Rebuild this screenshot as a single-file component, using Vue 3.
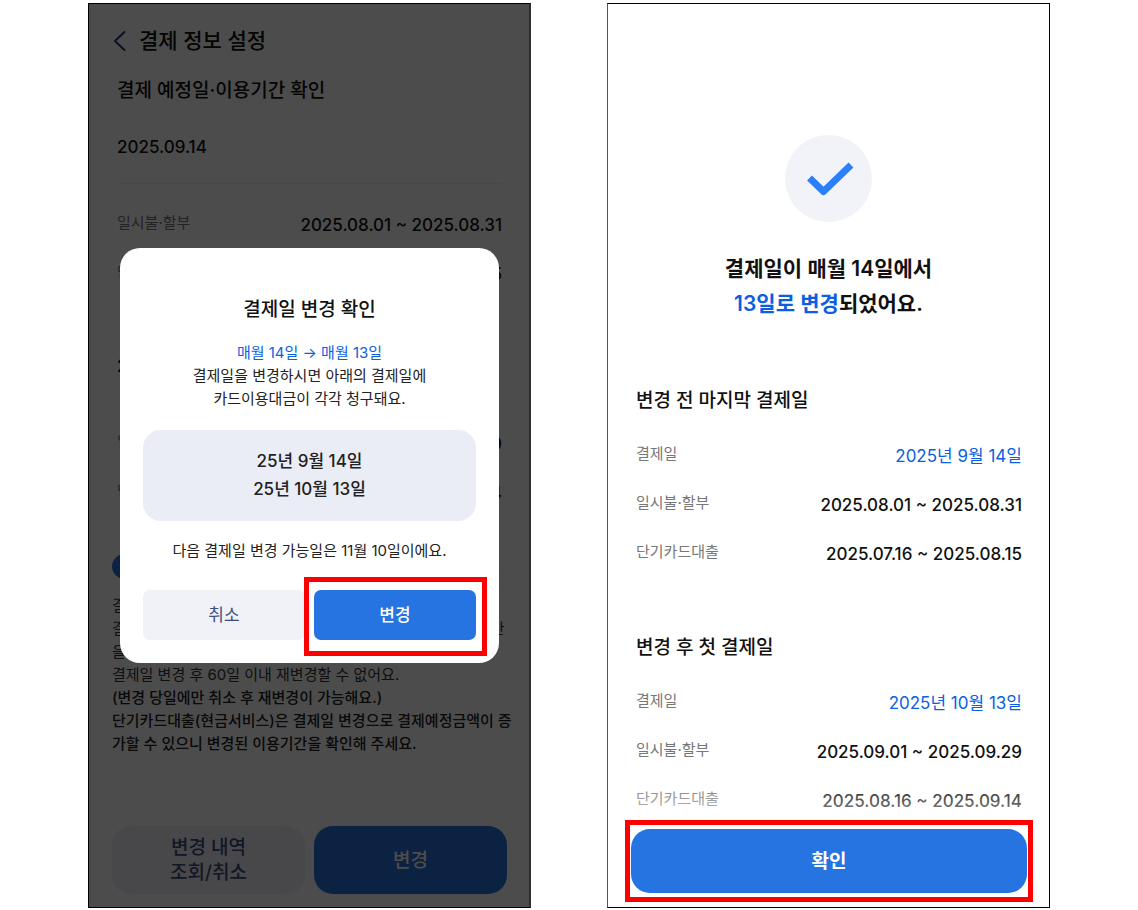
<script setup>
const currentPlan = [
  {
    date: '2025.09.14',
    rows: [
      { label: '일시불·할부', value: '2025.08.01 ~ 2025.08.31' },
      { label: '단기카드대출', value: '2025.07.16 ~ 2025.08.15' },
    ],
  },
  {
    date: '2025.10.13',
    rows: [
      { label: '일시불·할부', value: '2025.09.01 ~ 2025.09.29' },
      { label: '단기카드대출', value: '2025.08.16 ~ 2025.09.14' },
    ],
  },
]

const notices = [
  { text: '결제일을 변경하면 이용기간도 변경돼요.' },
  { text: '결제일 변경 시에는 변경 전과 변경 후의 결제일별 카드이용기간' },
  { text: '을 확인해 주세요.' },
  { text: '결제일 변경 후 60일 이내 재변경할 수 없어요.' },
  { text: '(변경 당일에만 취소 후 재변경이 가능해요.)', strong: true },
  { text: '단기카드대출(현금서비스)은 결제일 변경으로 결제예정금액이 증', strong: true },
  { text: '가할 수 있으니 변경된 이용기간을 확인해 주세요.', strong: true },
]

const results = [
  {
    title: '변경 전 마지막 결제일',
    rows: [
      { label: '결제일', value: '2025년 9월 14일', accent: true },
      { label: '일시불·할부', value: '2025.08.01 ~ 2025.08.31' },
      { label: '단기카드대출', value: '2025.07.16 ~ 2025.08.15' },
    ],
  },
  {
    title: '변경 후 첫 결제일',
    rows: [
      { label: '결제일', value: '2025년 10월 13일', accent: true },
      { label: '일시불·할부', value: '2025.09.01 ~ 2025.09.29' },
      { label: '단기카드대출', value: '2025.08.16 ~ 2025.09.14' },
    ],
  },
]
</script>

<template>
  <div class="page">
    <main class="phone phone-settings">
      <div class="settings">
        <header class="topbar">
          <button type="button" class="back" aria-label="뒤로">
            <svg width="14" height="22" viewBox="0 0 14 22" fill="none">
              <path d="M12.500 2 3 11 12.500 20" stroke="#273a73" stroke-width="2" stroke-linecap="round" stroke-linejoin="round" />
            </svg>
          </button>
          <h1>결제 정보 설정</h1>
        </header>
        <h2>결제 예정일·이용기간 확인</h2>
        <section v-for="plan in currentPlan" :key="plan.date" class="plan">
          <h3>{{ plan.date }}</h3>
          <dl class="rows">
            <div v-for="row in plan.rows" :key="row.label" class="row">
              <dt>{{ row.label }}</dt>
              <dd>{{ row.value }}</dd>
            </div>
          </dl>
        </section>
        <div class="info"></div>
        <div class="notices">
          <p v-for="notice in notices" :key="notice.text" :class="{ strong: notice.strong }">{{ notice.text }}</p>
        </div>
        <div class="actions">
          <button type="button" class="btn big soft">변경 내역<br />조회/취소</button>
          <button type="button" class="btn big primary">변경</button>
        </div>
      </div>

      <div class="overlay">
        <div class="modal" role="dialog" aria-labelledby="modal-title">
          <h2 id="modal-title">결제일 변경 확인</h2>
          <p class="lead"><span class="accent">매월 14일 → 매월 13일</span><br />결제일을 변경하시면 아래의 결제일에<br />카드이용대금이 각각 청구돼요.</p>
          <p class="dates">25년 9월 14일<br />25년 10월 13일</p>
          <p class="next">다음 결제일 변경 가능일은 11월 10일이에요.</p>
          <div class="modal-actions">
            <button type="button" class="btn soft cancel">취소</button>
            <div class="marked">
              <button type="button" class="btn primary">변경</button>
            </div>
          </div>
        </div>
      </div>
    </main>

    <main class="phone phone-result">
      <svg class="done" width="87" height="87" viewBox="0 0 87 87" fill="none">
        <circle cx="43.500" cy="43.500" r="43.500" fill="#f1f3f9" />
        <path d="M24.500 43 38.500 56.500 66 30" stroke="#2b7ffa" stroke-width="7" stroke-linejoin="round" />
      </svg>
      <h1>결제일이 매월 14일에서<br /><span class="accent">13일로 변경</span>되었어요.</h1>
      <section v-for="result in results" :key="result.title" class="result">
        <h2>{{ result.title }}</h2>
        <dl class="rows">
          <div v-for="row in result.rows" :key="row.label" class="row">
            <dt>{{ row.label }}</dt>
            <dd :class="{ accent: row.accent }">{{ row.value }}</dd>
          </div>
        </dl>
      </section>
      <footer class="confirm">
        <div class="marked">
          <button type="button" class="btn big primary">확인</button>
        </div>
      </footer>
    </main>
  </div>
</template>

<style>
body {
  margin: 0;
  background: #fff;
}
</style>

<style scoped>
.page {
  display: grid;
  grid-template-columns: repeat(2, minmax(0, 1fr));
  gap: 76px;
  min-height: 100vh;
  padding: 3px 88px 2px;
  box-sizing: border-box;
  font-family: Inter, 'Noto Sans CJK KR', sans-serif;
  color: #111;
}

h1,
h2,
h3,
p,
dl,
dd {
  margin: 0;
}

button {
  font-family: inherit;
  cursor: pointer;
}

.phone {
  position: relative;
  display: flex;
  flex-direction: column;
  box-sizing: border-box;
  border: 1px solid #000;
  background: #fff;
  white-space: nowrap;
}

.phone-settings {
  border-right: 2px solid #2e2e2e;
}

.phone-result {
  border-left-color: #555;
}

h2 {
  font-size: 19px;
  line-height: 28px;
  font-weight: 500;
}

.accent {
  color: #0b5fe0;
}

.settings {
  flex: 1;
  display: flex;
  flex-direction: column;
  padding: 23px 22px 13px 23px;
}

.settings > h2 {
  margin: 22px 5px 30px;
}

.topbar {
  display: flex;
  align-items: center;
  gap: 13px;
}

.topbar h1 {
  font-size: 21px;
  line-height: 28px;
  font-weight: 500;
}

.back {
  display: flex;
  padding: 0;
  border: 0;
  background: none;
}

.plan {
  margin: 0 5px;
}

.plan + .plan {
  margin-top: 66px;
}

.plan h3 {
  padding-bottom: 24px;
  border-bottom: 1px solid #f0f0f0;
  font-size: 17px;
  line-height: 24px;
  font-weight: 500;
}

.plan .rows {
  margin-top: 27px;
}

.rows {
  display: flex;
  flex-direction: column;
  gap: 21px;
}

.row {
  display: flex;
  justify-content: space-between;
}

.row dt {
  font-size: 15px;
  line-height: 24px;
  color: #777;
}

.row dd {
  font-size: 17px;
  line-height: 28px;
  font-weight: 500;
}

.row dd.accent {
  font-weight: 400;
}

.info {
  width: 25px;
  height: 25px;
  margin: 47px 0 15px;
  border-radius: 50%;
  background: #2673e2;
}

.notices {
  font-size: 15px;
  line-height: 23px;
  color: #333;
}

.notices .strong {
  font-weight: 500;
  color: #222;
}

.actions {
  display: flex;
  gap: 9px;
  margin-top: auto;
}

.btn {
  flex: 1 1 0;
  min-height: 50px;
  padding: 0;
  border: 0;
  border-radius: 7px;
  font-size: 17px;
  line-height: 25px;
  font-weight: 500;
}

.btn.big {
  min-height: 68px;
  border-radius: 19px;
  font-size: 19px;
}

.btn.cancel {
  font-weight: 400;
}

.soft {
  background: #f0f2f8;
  color: #3a4f7e;
}

.primary {
  background: #2673e2;
  color: #fff;
}

.overlay {
  position: absolute;
  inset: 0;
  display: flex;
  align-items: center;
  justify-content: center;
  padding: 0 30px 0 31px;
  background: rgba(0, 0, 0, 0.7);
}

.modal {
  flex: 1;
  box-sizing: border-box;
  padding: 48px 23px 23px;
  border-radius: 20px;
  background: #fff;
  text-align: center;
}

.lead {
  margin-top: 17px;
  font-size: 15px;
  line-height: 23px;
  color: #222;
}

.dates {
  margin-top: 20px;
  padding: 17px 0 18px;
  border-radius: 18px;
  background: #eaedf5;
  font-size: 17px;
  line-height: 28px;
  font-weight: 500;
  color: #222;
}

.next {
  margin-top: 18px;
  font-size: 15px;
  line-height: 23px;
  color: #222;
}

.modal-actions {
  display: flex;
  gap: 9px;
  margin-top: 28px;
}

.marked {
  position: relative;
  flex: 1 1 0;
  display: flex;
}

.marked::after {
  content: '';
  position: absolute;
  inset: -13px -11px -16px -10px;
  border: 5px solid #f00;
  pointer-events: none;
}

.phone-result {
  padding: 131px 0 14px;
}

.done {
  align-self: center;
}

.phone-result h1 {
  margin-top: 29px;
  text-align: center;
  font-size: 21px;
  line-height: 35px;
  font-weight: 600;
}

.result {
  padding: 0 27px 0 28px;
  margin-top: 66px;
}

.result .rows {
  margin-top: 27px;
}

.confirm {
  position: relative;
  display: flex;
  margin-top: auto;
  padding: 0 22px 0 23px;
}

.confirm::before {
  content: '';
  position: absolute;
  left: 0;
  right: 0;
  bottom: 100%;
  height: 50px;
  background: linear-gradient(rgba(255, 255, 255, 0), rgba(255, 255, 255, 0.7));
}

.confirm .btn {
  min-height: 64px;
  font-weight: 600;
}

.confirm .marked::after {
  inset: -9px -6px;
}
</style>
